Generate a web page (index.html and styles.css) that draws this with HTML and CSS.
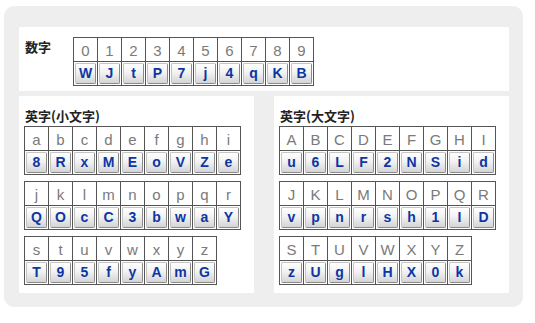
FILE: index.html
```html
<!DOCTYPE html>
<html lang="ja">
<head>
<meta charset="utf-8">
<title>文字変換表</title>
<link rel="stylesheet" href="styles.css">
</head>
<body>
<div class="frame">
  <section class="panel panel-top">
    <h2 class="label">数字</h2>
    <div class="keys">
      <div class="pair"><span class="ch">0</span><span class="cell"><b class="btn">W</b></span></div>
      <div class="pair"><span class="ch">1</span><span class="cell"><b class="btn">J</b></span></div>
      <div class="pair"><span class="ch">2</span><span class="cell"><b class="btn">t</b></span></div>
      <div class="pair"><span class="ch">3</span><span class="cell"><b class="btn">P</b></span></div>
      <div class="pair"><span class="ch">4</span><span class="cell"><b class="btn">7</b></span></div>
      <div class="pair"><span class="ch">5</span><span class="cell"><b class="btn">j</b></span></div>
      <div class="pair"><span class="ch">6</span><span class="cell"><b class="btn">4</b></span></div>
      <div class="pair"><span class="ch">7</span><span class="cell"><b class="btn">q</b></span></div>
      <div class="pair"><span class="ch">8</span><span class="cell"><b class="btn">K</b></span></div>
      <div class="pair"><span class="ch">9</span><span class="cell"><b class="btn">B</b></span></div>
    </div>
  </section>
  <div class="row">
    <section class="panel">
      <h2 class="heading">英字(小文字)</h2>
      <div class="keys">
        <div class="pair"><span class="ch">a</span><span class="cell"><b class="btn">8</b></span></div>
        <div class="pair"><span class="ch">b</span><span class="cell"><b class="btn">R</b></span></div>
        <div class="pair"><span class="ch">c</span><span class="cell"><b class="btn">x</b></span></div>
        <div class="pair"><span class="ch">d</span><span class="cell"><b class="btn">M</b></span></div>
        <div class="pair"><span class="ch">e</span><span class="cell"><b class="btn">E</b></span></div>
        <div class="pair"><span class="ch">f</span><span class="cell"><b class="btn">o</b></span></div>
        <div class="pair"><span class="ch">g</span><span class="cell"><b class="btn">V</b></span></div>
        <div class="pair"><span class="ch">h</span><span class="cell"><b class="btn">Z</b></span></div>
        <div class="pair"><span class="ch">i</span><span class="cell"><b class="btn">e</b></span></div>
      </div>
      <div class="keys">
        <div class="pair"><span class="ch">j</span><span class="cell"><b class="btn">Q</b></span></div>
        <div class="pair"><span class="ch">k</span><span class="cell"><b class="btn">O</b></span></div>
        <div class="pair"><span class="ch">l</span><span class="cell"><b class="btn">c</b></span></div>
        <div class="pair"><span class="ch">m</span><span class="cell"><b class="btn">C</b></span></div>
        <div class="pair"><span class="ch">n</span><span class="cell"><b class="btn">3</b></span></div>
        <div class="pair"><span class="ch">o</span><span class="cell"><b class="btn">b</b></span></div>
        <div class="pair"><span class="ch">p</span><span class="cell"><b class="btn">w</b></span></div>
        <div class="pair"><span class="ch">q</span><span class="cell"><b class="btn">a</b></span></div>
        <div class="pair"><span class="ch">r</span><span class="cell"><b class="btn">Y</b></span></div>
      </div>
      <div class="keys">
        <div class="pair"><span class="ch">s</span><span class="cell"><b class="btn">T</b></span></div>
        <div class="pair"><span class="ch">t</span><span class="cell"><b class="btn">9</b></span></div>
        <div class="pair"><span class="ch">u</span><span class="cell"><b class="btn">5</b></span></div>
        <div class="pair"><span class="ch">v</span><span class="cell"><b class="btn">f</b></span></div>
        <div class="pair"><span class="ch">w</span><span class="cell"><b class="btn">y</b></span></div>
        <div class="pair"><span class="ch">x</span><span class="cell"><b class="btn">A</b></span></div>
        <div class="pair"><span class="ch">y</span><span class="cell"><b class="btn">m</b></span></div>
        <div class="pair"><span class="ch">z</span><span class="cell"><b class="btn">G</b></span></div>
      </div>
    </section>
    <section class="panel">
      <h2 class="heading">英字(大文字)</h2>
      <div class="keys">
        <div class="pair"><span class="ch">A</span><span class="cell"><b class="btn">u</b></span></div>
        <div class="pair"><span class="ch">B</span><span class="cell"><b class="btn">6</b></span></div>
        <div class="pair"><span class="ch">C</span><span class="cell"><b class="btn">L</b></span></div>
        <div class="pair"><span class="ch">D</span><span class="cell"><b class="btn">F</b></span></div>
        <div class="pair"><span class="ch">E</span><span class="cell"><b class="btn">2</b></span></div>
        <div class="pair"><span class="ch">F</span><span class="cell"><b class="btn">N</b></span></div>
        <div class="pair"><span class="ch">G</span><span class="cell"><b class="btn">S</b></span></div>
        <div class="pair"><span class="ch">H</span><span class="cell"><b class="btn">i</b></span></div>
        <div class="pair"><span class="ch">I</span><span class="cell"><b class="btn">d</b></span></div>
      </div>
      <div class="keys">
        <div class="pair"><span class="ch">J</span><span class="cell"><b class="btn">v</b></span></div>
        <div class="pair"><span class="ch">K</span><span class="cell"><b class="btn">p</b></span></div>
        <div class="pair"><span class="ch">L</span><span class="cell"><b class="btn">n</b></span></div>
        <div class="pair"><span class="ch">M</span><span class="cell"><b class="btn">r</b></span></div>
        <div class="pair"><span class="ch">N</span><span class="cell"><b class="btn">s</b></span></div>
        <div class="pair"><span class="ch">O</span><span class="cell"><b class="btn">h</b></span></div>
        <div class="pair"><span class="ch">P</span><span class="cell"><b class="btn">1</b></span></div>
        <div class="pair"><span class="ch">Q</span><span class="cell"><b class="btn">I</b></span></div>
        <div class="pair"><span class="ch">R</span><span class="cell"><b class="btn">D</b></span></div>
      </div>
      <div class="keys">
        <div class="pair"><span class="ch">S</span><span class="cell"><b class="btn">z</b></span></div>
        <div class="pair"><span class="ch">T</span><span class="cell"><b class="btn">U</b></span></div>
        <div class="pair"><span class="ch">U</span><span class="cell"><b class="btn">g</b></span></div>
        <div class="pair"><span class="ch">V</span><span class="cell"><b class="btn">l</b></span></div>
        <div class="pair"><span class="ch">W</span><span class="cell"><b class="btn">H</b></span></div>
        <div class="pair"><span class="ch">X</span><span class="cell"><b class="btn">X</b></span></div>
        <div class="pair"><span class="ch">Y</span><span class="cell"><b class="btn">0</b></span></div>
        <div class="pair"><span class="ch">Z</span><span class="cell"><b class="btn">k</b></span></div>
      </div>
    </section>
  </div>
</div>
</body>
</html>
```

FILE: styles.css
```css
* { box-sizing: border-box; }
html, body { margin: 0; padding: 0; background: #fff; }
body { font-family: "Liberation Sans", Arial, sans-serif; }

.frame {
  margin: 6px 0 0 4px;
  width: 519px;
  height: 301px;
  background: #eeeeee;
  border-radius: 10px;
  padding: 21px 14px 14px 15px;
  display: flex;
  flex-direction: column;
  gap: 5px;
}

.panel {
  background: #fff;
  padding: 10px 5px 11px 5px;
  display: flex;
  flex-direction: column;
  gap: 6px;
}

.panel-top {
  flex-direction: row;
  align-items: flex-start;
  gap: 0;
  height: 64px;
  padding-top: 10px;
  padding-bottom: 0;
}

.label, .heading {
  margin: 0;
  font-family: "Noto Sans CJK JP", sans-serif;
  font-weight: bold;
  font-size: 13px;
  color: #222;
}

.label {
  width: 49px;
  line-height: 20px;
  padding-left: 1px;
}

.heading {
  line-height: 20px;
  margin-bottom: -6px;
  padding-left: 1px;
}

.row {
  display: flex;
  gap: 20px;
  height: 197px;
}

.row .panel { width: 235px; }

.keys {
  display: flex;
  gap: 1px;
  padding: 1px;
  background: #555;
  width: max-content;
}

.pair {
  display: grid;
  grid-template-rows: 23px 23px;
  gap: 1px;
  width: 23px;
}

.ch {
  background: #fff;
  color: #7a7a7a;
  font-size: 15px;
  line-height: 25px;
  text-align: center;
}

.cell {
  background: #fff;
  padding: 1px 1px 0 1px;
}

.btn {
  display: block;
  height: 21px;
  border: 1px solid #c4c4c4;
  border-right-color: #8a8a8a;
  border-bottom-color: #8a8a8a;
  border-radius: 2px;
  background: linear-gradient(#ffffff 0%, #f2f2f2 45%, #d4d4d4 100%);
  color: #0c36a4;
  font-weight: bold;
  font-size: 14px;
  line-height: 18px;
  text-align: center;
}
```
